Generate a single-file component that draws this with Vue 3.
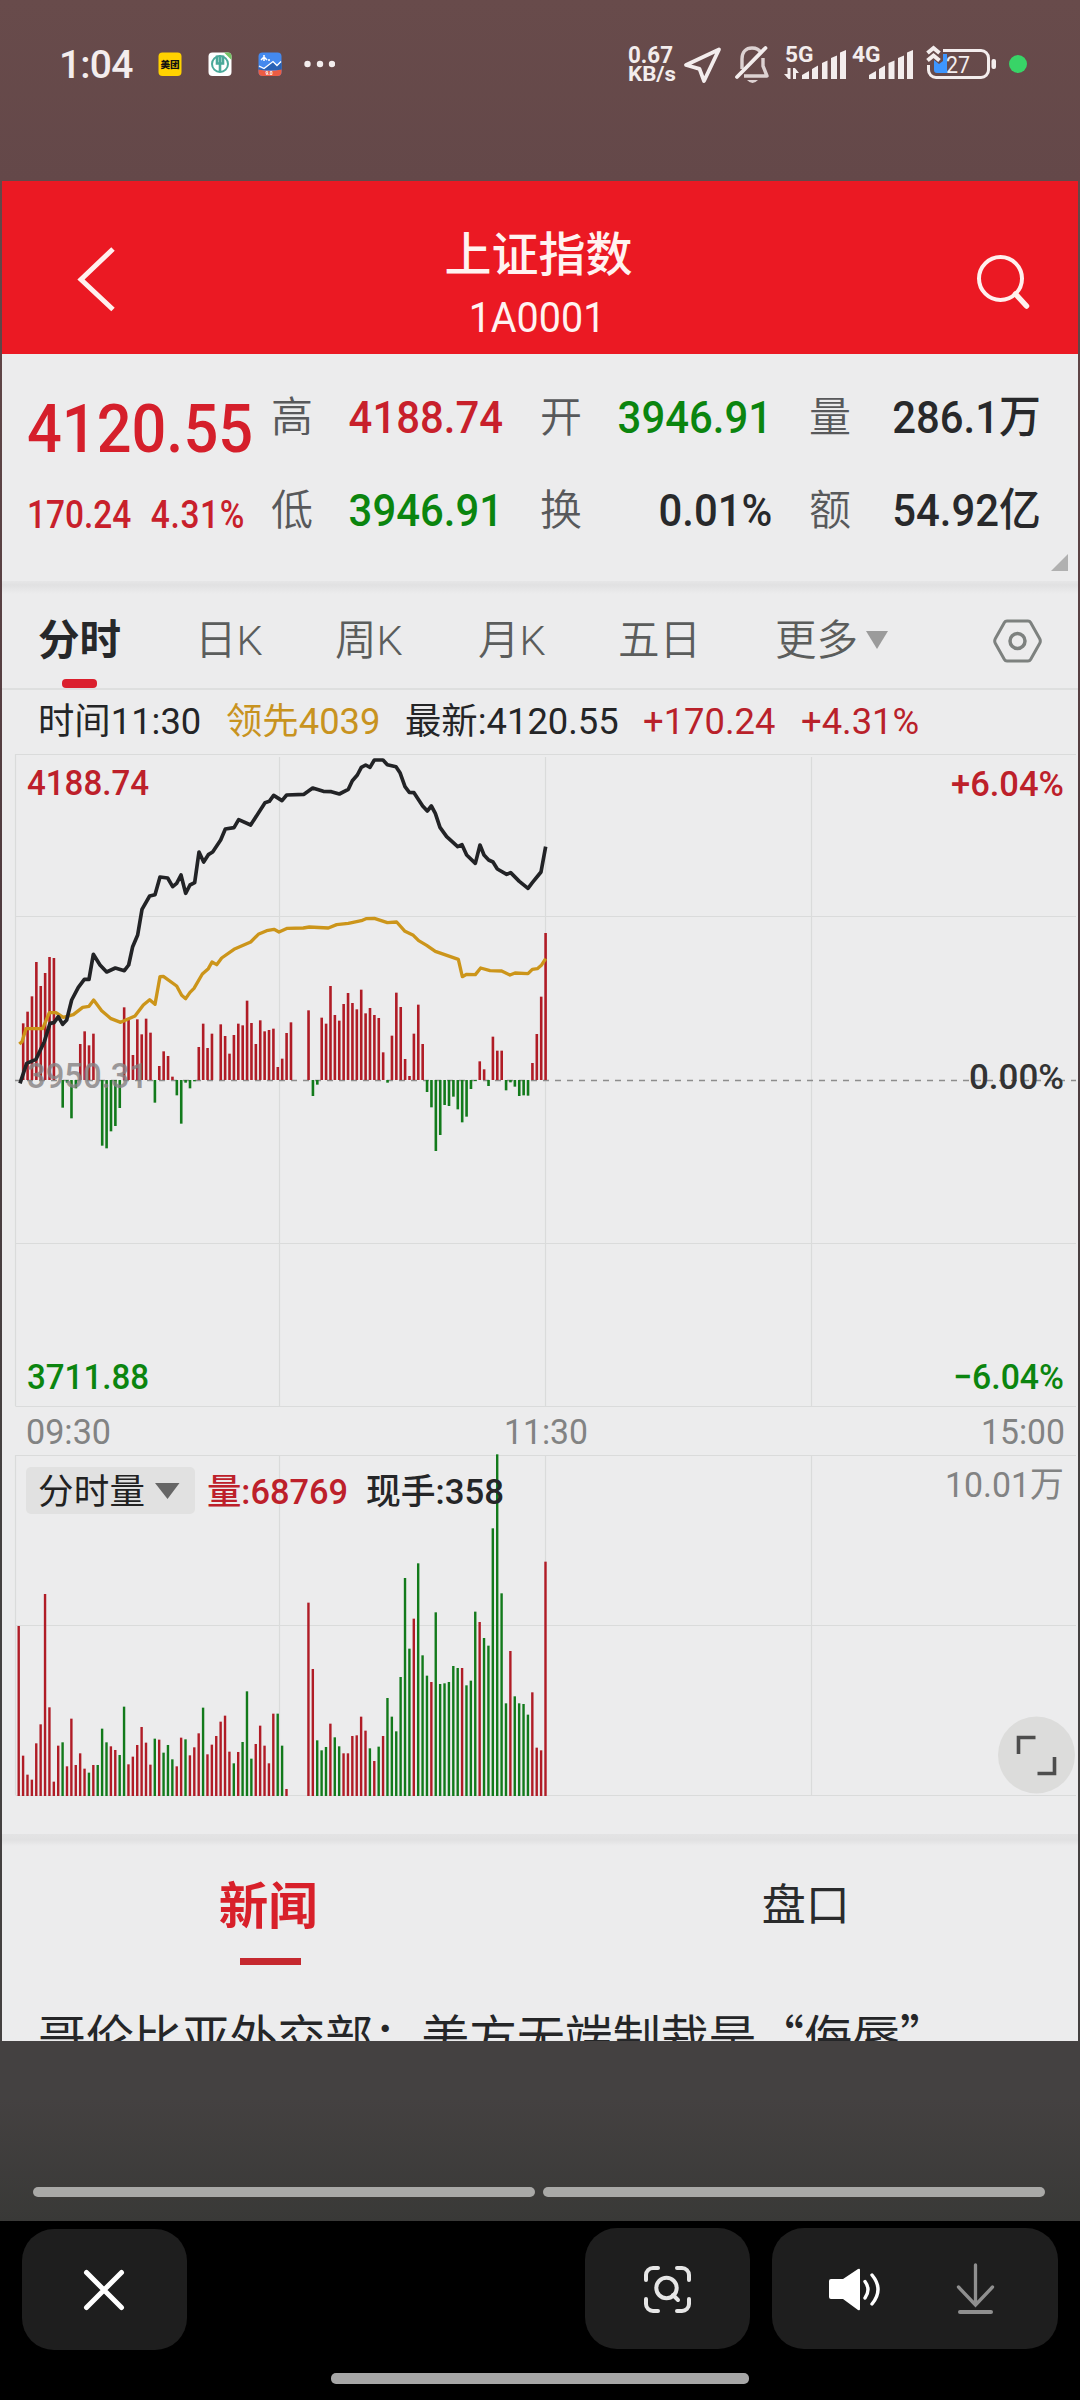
<script setup>
import { computed } from 'vue';

const quotes = [
  { label: '高', value: '4188.74', tone: 'up' },
  { label: '开', value: '3946.91', tone: 'down' },
  { label: '量', value: '286.1万', tone: 'flat' },
  { label: '低', value: '3946.91', tone: 'down' },
  { label: '换', value: '0.01%', tone: 'flat' },
  { label: '额', value: '54.92亿', tone: 'flat' }
];

const periods = ['分时', '日K', '周K', '月K', '五日'];

// one value per minute, 09:30 - 11:30
const momentum = [
  0, 170, 205, 251, 354, 282, 321, 369, 366, 0, -83, -8, -115, -25, 108, 146, 104, 139, 0, -197,
  -205, -154, -138, -84, 218, 180, 75, 182, 137, 184, 142, -68, 42, 86, 72, 10, -46, -131, -8, -25,
  -4, 99, 169, 96, 139, 0, 167, 132, 79, 135, 169, 164, 238, 171, 108, 179, 146, 150, 154, 39,
  64, 141, 173, 0, 0, 0, 209, -48, -14, 187, 169, 282, 195, 178, 228, 261, 231, 212, 271, 200,
  216, 195, 186, 83, -8, 133, 262, 219, 63, 12, 139, 226, 108, -36, -82, -213, -165, -75, -78, -50,
  -88, -127, -110, -27, -3, 56, 32, -18, 130, 88, 88, -31, -7, -20, -48, -46, -47, 51, 138, 250, 441
];

const volume = [
  510, 121, 64, 49, 158, 215, 606, 266, 43, 151, 161, 89, 232, 93, 128, 82, 70, 93, 93, 202,
  161, 149, 138, 123, 268, 95, 118, 153, 207, 160, 94, 172, 169, 130, 153, 110, 89, 175, 170, 122,
  146, 188, 265, 125, 154, 180, 223, 241, 133, 98, 132, 162, 314, 112, 156, 211, 151, 98, 247, 247,
  151, 21, 0, 0, 0, 0, 580, 381, 167, 137, 147, 217, 176, 149, 128, 128, 180, 182, 238, 196,
  143, 105, 148, 180, 294, 238, 194, 357, 654, 442, 532, 698, 422, 361, 342, 551, 336, 338, 342, 390,
  384, 384, 332, 346, 553, 522, 474, 451, 803, 1025, 608, 278, 435, 299, 278, 276, 244, 311, 145, 137, 703
];

// r - minute closed higher, g - lower
const sides =
  'rrrrrrrrrrgrrrrrgrgggrrggrrrrrrgrgggrrgrrrgrrrrrrgrgggrrrrrggr' +
  '....' +
  'rrgggrggrrrrrrgrgrggggggrgggrggggggrgggrggggggrggggrrrr';

const step = 13.17;

const momentumBars = computed(() =>
  momentum
    .map((v, i) => ({ x: 52.5 + i * step, y: v > 0 ? 1020 - v : 1020, h: Math.abs(v), up: v > 0 }))
    .filter(b => b.h)
);

const volumeBars = computed(() =>
  volume
    .map((v, i) => ({ x: 52.5 + i * step, y: 3168 - v, h: v, up: sides[i] === 'r' }))
    .filter(b => b.h)
);

const price =
  '60,1030 80,970 108,958 133,905 150,850 162,848 175,830 188,853 200,840 215,780 235,742 253,718 267,718 280,643 ' +
  '300,675 320,696 346,684 373,692 386,675 398,620 413,585 426,508 449,468 465,464 480,411 503,414 518,440 530,430 ' +
  '543,405 557,460 570,435 584,428 597,336 611,366 625,344 638,336 662,300 676,267 702,263 716,239 752,255 795,188 ' +
  '808,184 821,166 846,182 860,165 912,163 938,144 970,154 994,155 1018,162 1045,148 1057,122 1072,105 1084,82 ' +
  '1097,75 1110,82 1123,60 1149,60 1162,74 1188,80 1200,98 1215,140 1228,157 1242,158 1268,198 1282,213 1294,198 ' +
  '1306,220 1320,262 1340,290 1373,320 1386,314 1400,345 1426,370 1440,315 1452,345 1466,360 1479,366 1492,387 ' +
  '1520,403 1532,398 1558,424 1584,445 1597,428 1623,396 1637,320';

const average =
  '58,912 66,905 78,866 128,866 148,818 168,818 190,832 220,824 248,802 267,799 281,780 305,812 333,836 362,847 ' +
  '405,828 430,795 449,779 465,793 480,710 490,709 530,738 545,766 557,776 570,757 582,745 607,702 625,686 636,666 ' +
  '650,674 665,654 702,628 752,606 775,583 800,572 822,568 837,576 862,565 910,564 928,561 985,564 1010,554 ' +
  '1045,550 1084,542 1098,536 1123,535 1162,548 1190,546 1215,574 1240,586 1256,602 1280,616 1306,634 1375,658 ' +
  '1387,710 1400,703 1426,704 1442,684 1470,692 1505,693 1530,705 1545,699 1584,701 1597,688 1612,686 1624,676 1637,656';
</script>

<template>
  <div class="screen">
    <div class="status">
      <span class="clock">1:04</span>
      <svg class="status-apps" width="180" height="30" viewBox="155 49 180 30">
        <rect x="158.5" y="52.5" width="23" height="23.5" rx="4" fill="#ffd200" />
        <text x="160.5" y="68" font-size="9.6" font-weight="900" fill="#111" textLength="19">美团</text>
        <rect x="208.5" y="52.5" width="23" height="23.5" rx="4" fill="#fff" />
        <path d="M224 52.5h4a3.5 3.5 0 0 1 3.5 3.5v4z" fill="#74c365" />
        <circle cx="220" cy="64" r="8" fill="none" stroke="#4aa99a" stroke-width="2" />
        <path d="M217 55.5v8h6v-8M220 55v17" fill="none" stroke="#4aa99a" stroke-width="2.6" />
        <rect x="258.5" y="52.5" width="23" height="23.5" rx="4" fill="#4489ee" />
        <path d="M258.5 68l6 1 8-7 4 4 5-4v8h-23z" fill="#2962b5" />
        <path d="M259 66l5 2.5 9-7 4 4 4-4" fill="none" stroke="#fff" stroke-width="1.3" />
        <path d="M258.5 69.5q11.5 2.5 23 0v2.5a4 4 0 0 1-4 4h-15a4 4 0 0 1-4-4z" fill="#ed5c43" />
        <path d="M261 60l3-3 3 3M264 55v6M268 60h2" fill="none" stroke="#fff" stroke-width="1.5" />
        <text x="265.5" y="75.2" font-size="5" font-weight="700" fill="#fff">9.0</text>
        <circle cx="307.5" cy="64" r="3.2" fill="#f3eded" />
        <circle cx="320" cy="64" r="3.2" fill="#f3eded" />
        <circle cx="332" cy="64" r="3.2" fill="#f3eded" />
      </svg>
      <svg class="status-icons" width="410" height="50" viewBox="622 40 410 50" fill="#f3eded">
        <text x="628" y="62.5" font-size="24" font-weight="700" textLength="45" lengthAdjust="spacingAndGlyphs">0.67</text>
        <text x="628" y="80.5" font-size="20.5" font-weight="700" textLength="48" lengthAdjust="spacingAndGlyphs">KB/s</text>
        <path d="M719 49.5L686 65l13.5 3.8L704 81z" fill="none" stroke="#f3eded" stroke-width="3.8" stroke-linejoin="round" />
        <g fill="none" stroke="#ddd2d2" stroke-width="3.4">
          <path d="M742 69V59c0-7 4-11 10-11 4 0 7 1 9 5M763 58v8l4 10h-23" stroke-linejoin="round" />
          <path d="M737 77l28.5-29" stroke="#f3eded" stroke-width="3.8" stroke-linecap="round" />
        </g>
        <path d="M747 80h11q-5.500 6-11 0z" fill="#ddd2d2" />
        <text x="785" y="62.3" font-size="21.5" font-weight="700" textLength="28.5" lengthAdjust="spacingAndGlyphs">5G</text>
        <path d="M787.5 68h3v11h-2l-4.500-5h3.500zM793 79V68h2l4 5h-3v6z" />
        <path d="M802 79v-4l7-4v8zM812 79V69l6-3.5V79zM822 79V63l5.5-2.5V79zM831 79V58l6-2.5V79zM840 79V52.5l6-2.5v29z" />
        <text x="852" y="62.3" font-size="21.5" font-weight="700" textLength="28.5" lengthAdjust="spacingAndGlyphs">4G</text>
        <path d="M869 79v-4l7-4v8zM879 79V69l6-3.5V79zM888.5 79V63l6-2.5V79zM898 79V58l6-2.5V79zM907 79V52.5l6-2.5v29z" />
        <path d="M943 50.5h38a7.5 7.5 0 0 1 7.5 7.5v12a7.5 7.5 0 0 1-7.5 7.5h-45a7.5 7.5 0 0 1-7.5-7.5v-5" fill="none" stroke="#f3eded" stroke-width="3" />
        <rect x="991.5" y="59" width="4.5" height="10" rx="2" />
        <path d="M934 60l5 4 4-3v-7h4v19h-10a3 3 0 0 1-3-3z" fill="#3d96ff" />
        <path d="M927.5 53l6-5 6 5M927.5 60.5l6-5 6 5" fill="none" stroke="#f3eded" stroke-width="4" />
        <text x="946" y="73.2" font-size="24" textLength="24" lengthAdjust="spacingAndGlyphs">27</text>
        <circle cx="1018" cy="64" r="9" fill="#38d467" />
      </svg>
    </div>

    <div class="app">
      <header class="header">
        <svg width="46" height="70" viewBox="74 244 46 70">
          <path d="M113 249L81 279.5l32 30" fill="none" stroke="#fff0ee" stroke-width="5" />
        </svg>
        <div class="header-title">
          <h1>上证指数</h1>
          <span>1A0001</span>
        </div>
        <svg width="60" height="60" viewBox="972 250 60 60">
          <circle cx="1000.5" cy="278.5" r="21.5" fill="none" stroke="#fff0ee" stroke-width="4" />
          <path d="M1015.5 294l11 12" stroke="#fff0ee" stroke-width="5.5" stroke-linecap="round" />
        </svg>
      </header>

      <section class="quote">
        <div class="last up">
          <strong>4120.55</strong>
          <div class="change"><span>170.24</span><span>4.31%</span></div>
        </div>
        <div class="stats">
          <div v-for="q in quotes" :key="q.label" class="stat">
            <span class="stat-label">{{ q.label }}</span>
            <span class="stat-value" :class="q.tone">{{ q.value }}</span>
          </div>
        </div>
        <i class="corner"></i>
      </section>

      <nav class="periods">
        <span v-for="(p, i) in periods" :key="p" class="period" :class="{ active: i === 0 }">{{ p }}</span>
        <span class="period more">更多<i class="caret"></i></span>
        <svg width="52" height="50" viewBox="992 616 52 50" fill="none" stroke="#7d817f">
          <path d="M1007 621h21a3 3 0 0 1 2.6 1.5l9 16a5 5 0 0 1 0 5l-9 16a3 3 0 0 1-2.6 1.5h-21a3 3 0 0 1-2.6-1.5l-9-16a5 5 0 0 1 0-5l9-16a3 3 0 0 1 2.6-1.5z" stroke-width="3" />
          <circle cx="1017.5" cy="641" r="7.5" stroke-width="3.5" />
        </svg>
      </nav>

      <div class="info">
        <span><b>时间11:30</b></span>
        <span class="gold"><b>领先4039</b></span>
        <span><b>最新:4120.55</b></span>
        <span class="up"><b>+170.24</b></span>
        <span class="up"><b>+4.31%</b></span>
      </div>

      <svg class="chart" width="1076" height="1082" viewBox="2 752 1076 1082">
        <path
          d="M15.5 1406V754.5H1076M15.5 916.5H1076M15.5 1243.5H1076M15.5 1406.5H1076M279.5 757V1406M545.5 757V1406M811.5 757V1406"
          class="grid"
        />
        <path d="M15.5 1795V1455.5H1076M15.5 1625.5H1076M15.5 1795.5H1076M279.5 1456V1795M545.5 1456V1795M811.5 1456V1795" class="grid" />
        <path d="M15 1080.5H1076" stroke="#8d8d8d" stroke-width="1.5" stroke-dasharray="6 6" />

        <g transform="translate(0 740) scale(0.33333)">
          <rect v-for="(b, i) in momentumBars" :key="'m' + i" :x="b.x" :y="b.y" :height="b.h" width="7.8" :class="b.up ? 'bar-up' : 'bar-down'" />
          <rect v-for="(b, i) in volumeBars" :key="'v' + i" :x="b.x" :y="b.y" :height="b.h" width="7.2" :class="b.up ? 'bar-up' : 'bar-down'" />
        </g>
        <text x="27" y="1088" class="axis base" textLength="121" lengthAdjust="spacingAndGlyphs">3950.31</text>
        <g transform="translate(0 740) scale(0.33333)" fill="none" stroke-linejoin="round">
          <polyline :points="average" stroke="#cc951a" stroke-width="10" />
          <polyline :points="price" stroke="#222326" stroke-width="11" />
        </g>

        <g class="axis">
          <text x="27" y="795" class="t-up" textLength="122" lengthAdjust="spacingAndGlyphs">4188.74</text>
          <text x="951" y="795.5" class="t-up" textLength="113" lengthAdjust="spacingAndGlyphs">+6.04%</text>
          <text x="969" y="1088.5" fill="#333" textLength="95" lengthAdjust="spacingAndGlyphs">0.00%</text>
          <text x="27" y="1389" class="t-down" textLength="122" lengthAdjust="spacingAndGlyphs">3711.88</text>
          <text x="953" y="1389" class="t-down" textLength="111" lengthAdjust="spacingAndGlyphs">−6.04%</text>
        </g>
        <g class="axis time">
          <text x="26" y="1443.5" textLength="85" lengthAdjust="spacingAndGlyphs">09:30</text>
          <text x="504" y="1443.5" textLength="84" lengthAdjust="spacingAndGlyphs">11:30</text>
          <text x="981" y="1443.5" textLength="84" lengthAdjust="spacingAndGlyphs">15:00</text>
          <text x="945" y="1497" textLength="119" lengthAdjust="spacingAndGlyphs">10.01万</text>
        </g>

        <rect x="26" y="1467" width="169" height="47" rx="5" fill="#e1e1e1" />
        <text x="38" y="1503.5" font-size="35.5" fill="#222" textLength="107">分时量</text>
        <path d="M155 1483h24.5l-12 16z" fill="#666" />
        <g class="axis">
          <text x="207" y="1503.5" class="t-up" textLength="141" lengthAdjust="spacingAndGlyphs">量:68769</text>
          <text x="366" y="1503.5" fill="#252628" textLength="138" lengthAdjust="spacingAndGlyphs">现手:358</text>
        </g>

        <circle cx="1036.5" cy="1755" r="38.5" fill="#dcdcdb" />
        <path d="M1018.5 1754v-16.5h17M1054.5 1757v16.5h-17" fill="none" stroke="#4d4d4d" stroke-width="3.6" />
      </svg>

      <div class="feed-tabs">
        <span class="feed-tab on">新闻</span>
        <span class="feed-tab">盘口</span>
      </div>
      <p class="headline">哥伦比亚外交部：美方无端制裁是“侮辱”</p>
    </div>

    <div class="segments"><i></i><i></i></div>

    <div class="toolbar">
      <div class="tool close">
        <svg width="46" height="46" viewBox="-22 -23 46 46">
          <path d="M-17.5-17.5l35 35M17.5-17.5l-35 35" stroke="#fff" stroke-width="5" stroke-linecap="round" />
        </svg>
      </div>
      <div class="tool scan">
        <svg width="52" height="52" viewBox="642 2262 52 52" fill="none" stroke="#e6e6e6" stroke-width="4" stroke-linecap="round">
          <path d="M646 2279v-5a7 7 0 0 1 7-7h5M677 2267h5a7 7 0 0 1 7 7v5M689 2298v5a7 7 0 0 1-7 7h-5M658 2310h-5a7 7 0 0 1-7-7v-5" />
          <circle cx="666.5" cy="2287" r="10.2" />
          <path d="M673 2294l5 5" />
        </svg>
      </div>
      <div class="tool sound">
        <svg width="180" height="60" viewBox="825 2258 180 60" fill="none" stroke-linecap="round">
          <path d="M831 2278h12l15-10q2-1 2 1v39q0 2-2 1l-15-11h-12q-2 0-2-2v-16q0-2 2-2z" fill="#fff" />
          <path d="M865 2280.5q6 8 0 16.5M872 2274q12 14.5 0 29" stroke="#fff" stroke-width="3.4" />
          <path d="M975.5 2264v40M958.5 2286l17 18 17-18" stroke="#8f8f8f" stroke-width="3.3" />
          <path d="M960 2311h31" stroke="#8f8f8f" stroke-width="4" />
        </svg>
      </div>
    </div>
    <div class="home"></div>
  </div>
</template>

<style>
body {
  margin: 0;
  background: #000;
}
</style>

<style scoped>
.screen {
  width: 1080px;
  height: 2400px;
  overflow: hidden;
  display: flex;
  flex-direction: column;
  font-family: Roboto, "Noto Sans CJK SC", sans-serif;
  background: linear-gradient(#684b4b 0, #644849 181px, #503b3f 900px, #444141 1500px, #444141 2100px, #393937 2221px, #000 2221px);
}

.screen svg {
  display: block;
  flex: none;
}

.status {
  display: flex;
  height: 181px;
  flex: none;
}

.clock {
  width: 96px;
  padding: 42px 0 0 59px;
  font-size: 39px;
  line-height: 46px;
  font-weight: 500;
  color: #f3eded;
  letter-spacing: -0.8px;
}

.status-apps {
  margin-top: 49px;
}

.status-icons {
  margin: 40px 0 0 287px;
}

.app {
  height: 1860px;
  flex: none;
  margin: 0 2px;
  overflow: hidden;
  background: #ececed;
}

.header {
  display: flex;
  align-items: flex-start;
  height: 173px;
  padding: 0 46px 0 72px;
  background: #eb1923;
}

.header > svg {
  margin-top: 63px;
}

.header > svg:last-child {
  margin-top: 69px;
}

.header-title {
  flex: 1;
  text-align: center;
  color: #fff3f1;
  padding: 44px 15px 0 0;
}

.header-title h1 {
  margin: 0;
  font-size: 47px;
  line-height: 60px;
  font-weight: 500;
}

.header-title span {
  display: block;
  margin: 8px 3px 0 0;
  font-size: 42px;
  line-height: 50px;
  transform: scaleX(0.94);
}

.up {
  color: #c8202b;
}

.down {
  color: #0b850f;
}

.flat {
  color: #28292b;
}

.quote {
  position: relative;
  display: flex;
  height: 227px;
}

.last {
  width: 244px;
  padding: 35px 0 0 25px;
}

.last strong {
  display: block;
  font-size: 67px;
  line-height: 80px;
  font-weight: 500;
  transform: scaleX(0.915);
  transform-origin: left;
  color: #d51f2b;
}

.change {
  display: flex;
  width: 280px;
  gap: 22px;
  margin-top: 23px;
  font-size: 38px;
  line-height: 46px;
  font-weight: 500;
  transform: scaleX(0.88);
  transform-origin: left;
}

.change span:last-child {
  letter-spacing: 0.8px;
}

.stats {
  display: grid;
  grid-template-columns: 232px 232px 232px;
  column-gap: 37px;
  grid-template-rows: 60px 60px;
  row-gap: 33px;
  padding-top: 34px;
}

.stat {
  display: flex;
  justify-content: space-between;
  align-items: center;
}

.stat-label {
  font-size: 42px;
  line-height: 60px;
  color: #58595b;
  font-weight: 350;
}

.stat-value {
  font-size: 45px;
  line-height: 60px;
  font-weight: 500;
  transform: scaleX(0.93);
  transform-origin: right;
}

.corner {
  position: absolute;
  right: 10px;
  bottom: 10px;
  border-style: solid;
  border-width: 0 0 17px 17px;
  border-color: transparent transparent #b0b0b0;
}

.periods {
  display: flex;
  box-sizing: border-box;
  height: 109px;
  padding: 11px 0 0 36px;
  border-bottom: 2px solid #dedfdf;
  background: linear-gradient(#e6e6e7 0, #e1e1e2 4px, #e6e6e7 8px, #ececed 13px);
}

.period {
  position: relative;
  width: 157px;
  font-size: 41.5px;
  line-height: 98px;
  color: #5b5d5c;
  font-weight: 350;
}

.period:nth-child(2) {
  width: 140px;
}

.period:nth-child(3) {
  width: 143px;
}

.period:nth-child(4) {
  width: 140px;
}

.period.active {
  font-weight: 700;
  color: #27282a;
}

.period.active::after {
  content: '';
  position: absolute;
  left: 24px;
  top: 87px;
  width: 35px;
  height: 9px;
  border-radius: 4px;
  background: #db1f2d;
}

.period.more {
  width: 217px;
}

.periods svg {
  margin-top: 24px;
}

.caret {
  display: inline-block;
  margin-left: 8px;
  vertical-align: 6px;
  border-style: solid;
  border-width: 18px 11.5px 0;
  border-color: #9b9b9b transparent transparent;
}

.info {
  display: grid;
  grid-template-columns: 188px 179px 238px 158px 1fr;
  height: 62px;
  padding-left: 36px;
  font-size: 36px;
  line-height: 64px;
  color: #242527;
  white-space: nowrap;
}

.info b {
  display: inline-block;
  font-weight: 400;
  transform: scaleX(1.01);
  transform-origin: left;
}

.info .gold {
  color: #c8931f;
}

.info .up {
  color: #b9212a;
}

.grid {
  fill: none;
  stroke: #dadbdb;
  stroke-width: 1.2;
}

.bar-up {
  fill: #b01c26;
}

.bar-down {
  fill: #127a1b;
}

.axis {
  font-size: 35.5px;
  font-weight: 500;
}

.axis.base {
  fill: #868284;
  opacity: 0.8;
}

.axis.time {
  fill: #828383;
  font-weight: 400;
}

.t-up {
  fill: #bd202a;
}

.t-down {
  fill: #0b850f;
}

.feed-tabs {
  display: flex;
  height: 144px;
  padding: 0 7px 0 0;
  background: linear-gradient(#e3e3e4 0, #e1e1e2 6px, #ececed 12px);
}

.feed-tab {
  position: relative;
  flex: 1;
  padding: 37px 0 0 7px;
  text-align: center;
  font-size: 44px;
  line-height: 70px;
  color: #2a2b2c;
}

.feed-tab.on {
  padding: 38px 0 0 1px;
  font-size: 49.5px;
  font-weight: 700;
  color: #d8202a;
}

.feed-tab.on::after {
  content: '';
  position: absolute;
  left: 238px;
  top: 124px;
  width: 61px;
  height: 7px;
  background: #c5282f;
}

.headline {
  margin: 0;
  padding: 21px 0 0 36px;
  font-family: "Noto Sans CJK SC", sans-serif;
  font-size: 47.9px;
  line-height: 70px;
  color: #252628;
  white-space: nowrap;
}

.segments {
  display: flex;
  flex: none;
  gap: 8px;
  height: 34px;
  padding: 146px 35px 0 33px;
}

.segments i {
  flex: 1;
  height: 10px;
  border-radius: 5px;
  background: #a9a9a7;
}

.toolbar {
  display: flex;
  flex: none;
  height: 138px;
  padding: 7px 22px 0;
}

.tool {
  display: flex;
  align-items: center;
  justify-content: center;
  width: 165px;
  height: 121px;
  border-radius: 32px;
  background: #1e1e1e;
}

.tool.close {
  margin: 1px 398px 0 0;
}

.tool.sound {
  width: 286px;
  margin-left: 22px;
}

.home {
  width: 418px;
  height: 11px;
  margin: 7px 0 0 331px;
  border-radius: 5px;
  background: #a6a6a6;
}
</style>
